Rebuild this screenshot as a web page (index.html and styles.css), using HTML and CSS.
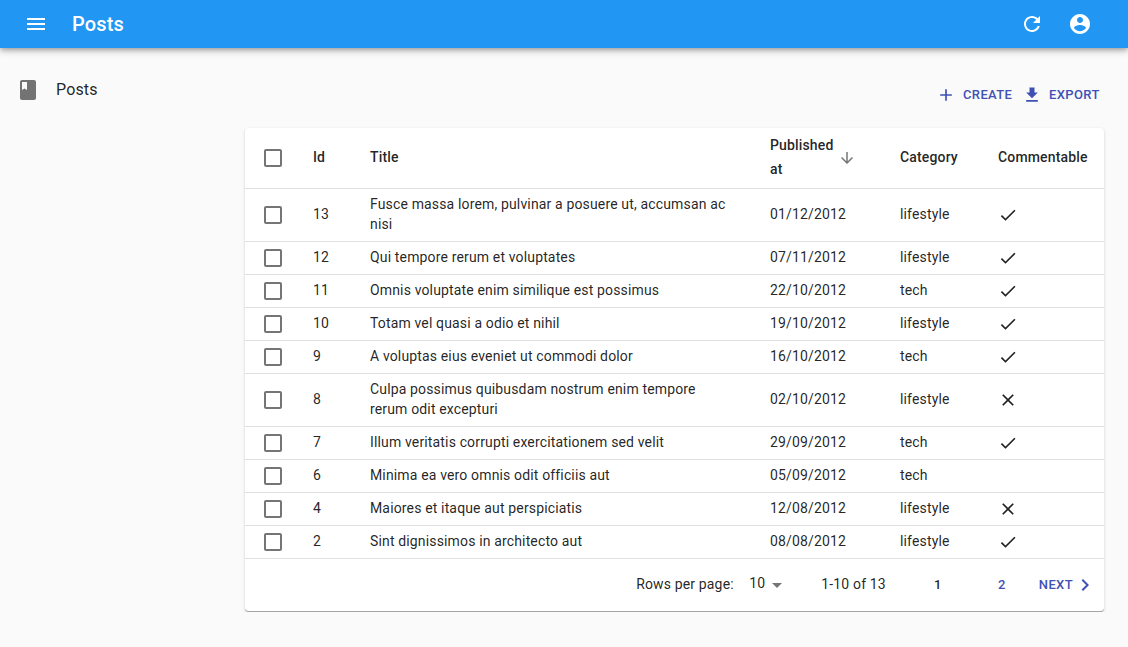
FILE: index.html
```html
<!DOCTYPE html>
<html lang="en">
<head>
<meta charset="utf-8">
<title>Posts</title>
<link rel="stylesheet" href="styles.css">
</head>
<body>
<svg class="sprite" aria-hidden="true">
  <symbol id="box" viewBox="0 0 24 24"><path d="M19 5v14H5V5h14m0-2H5c-1.100 0-2 .9-2 2v14c0 1.100.9 2 2 2h14c1.100 0 2-.9 2-2V5c0-1.100-.9-2-2-2z"/></symbol>
  <symbol id="done" viewBox="0 0 24 24"><path d="M9 16.200L4.800 12l-1.400 1.400L9 19 21 7l-1.400-1.400L9 16.200z"/></symbol>
  <symbol id="clear" viewBox="0 0 24 24"><path d="M19 6.410L17.590 5 12 10.590 6.410 5 5 6.410 10.590 12 5 17.590 6.410 19 12 13.410 17.590 19 19 17.590 13.410 12z"/></symbol>
</svg>
<header class="appbar">
  <svg class="icon" viewBox="0 0 24 24"><path d="M3 18h18v-2H3v2zm0-5h18v-2H3v2zm0-7v2h18V6H3z"/></svg>
  <h1 class="appbar-title">Posts</h1>
  <svg class="icon" viewBox="0 0 24 24"><path d="M17.650 6.350C16.200 4.900 14.210 4 12 4c-4.420 0-7.990 3.580-7.990 8s3.570 8 7.990 8c3.730 0 6.840-2.550 7.730-6h-2.080c-.82 2.330-3.040 4-5.650 4-3.310 0-6-2.690-6-6s2.690-6 6-6c1.660 0 3.140.69 4.220 1.780L13 11h7V4l-2.350 2.350z"/></svg>
  <svg class="icon account" viewBox="0 0 24 24"><path d="M12 2C6.480 2 2 6.480 2 12s4.480 10 10 10 10-4.480 10-10S17.520 2 12 2zm0 3c1.660 0 3 1.340 3 3s-1.340 3-3 3-3-1.340-3-3 1.340-3 3-3zm0 14.200c-2.500 0-4.710-1.280-6-3.220.03-1.990 4-3.080 6-3.080 1.990 0 5.970 1.090 6 3.080-1.290 1.940-3.500 3.220-6 3.220z"/></svg>
</header>
<div class="layout">
  <nav class="sidebar">
    <a class="menu-item">
      <svg class="icon" viewBox="0 0 24 24"><path d="M18 2H6c-1.100 0-2 .9-2 2v16c0 1.100.9 2 2 2h12c1.100 0 2-.9 2-2V4c0-1.100-.9-2-2-2zM6 4h5v8l-2.500-1.500L6 12V4z"/></svg>
      <span>Posts</span>
    </a>
  </nav>
  <main class="content">
    <div class="toolbar">
      <a class="button"><svg class="icon-small" viewBox="0 0 24 24"><path d="M19 13h-6v6h-2v-6H5v-2h6V5h2v6h6v2z"/></svg>Create</a>
      <a class="button"><svg class="icon-small" viewBox="0 0 24 24"><path d="M19 9h-4V3H9v6H5l7 7 7-7zM5 18v2h14v-2H5z"/></svg>Export</a>
    </div>
    <section class="card">
      <table class="grid">
        <colgroup><col class="c-check"><col class="c-id"><col class="c-title"><col class="c-date"><col class="c-cat"><col class="c-comment"></colgroup>
        <thead>
          <tr><th class="check"><svg class="icon"><use href="#box"/></svg></th><th>Id</th><th>Title</th><th><span class="sort"><span>Published at</span><svg class="sort-icon" viewBox="0 0 24 24"><path d="M20 12l-1.410-1.410L13 16.170V4h-2v12.170l-5.580-5.590L4 12l8 8 8-8z"/></svg></span></th><th>Category</th><th>Commentable</th></tr>
        </thead>
        <tbody>
          <tr><td class="check"><svg class="icon"><use href="#box"/></svg></td><td>13</td><td class="title">Fusce massa lorem, pulvinar a posuere ut, accumsan ac nisi</td><td>01/12/2012</td><td>lifestyle</td><td class="flag"><svg class="icon-small"><use href="#done"/></svg></td></tr>
          <tr><td class="check"><svg class="icon"><use href="#box"/></svg></td><td>12</td><td class="title">Qui tempore rerum et voluptates</td><td>07/11/2012</td><td>lifestyle</td><td class="flag"><svg class="icon-small"><use href="#done"/></svg></td></tr>
          <tr><td class="check"><svg class="icon"><use href="#box"/></svg></td><td>11</td><td class="title">Omnis voluptate enim similique est possimus</td><td>22/10/2012</td><td>tech</td><td class="flag"><svg class="icon-small"><use href="#done"/></svg></td></tr>
          <tr><td class="check"><svg class="icon"><use href="#box"/></svg></td><td>10</td><td class="title">Totam vel quasi a odio et nihil</td><td>19/10/2012</td><td>lifestyle</td><td class="flag"><svg class="icon-small"><use href="#done"/></svg></td></tr>
          <tr><td class="check"><svg class="icon"><use href="#box"/></svg></td><td>9</td><td class="title">A voluptas eius eveniet ut commodi dolor</td><td>16/10/2012</td><td>tech</td><td class="flag"><svg class="icon-small"><use href="#done"/></svg></td></tr>
          <tr><td class="check"><svg class="icon"><use href="#box"/></svg></td><td>8</td><td class="title">Culpa possimus quibusdam nostrum enim tempore rerum odit excepturi</td><td>02/10/2012</td><td>lifestyle</td><td class="flag"><svg class="icon-small"><use href="#clear"/></svg></td></tr>
          <tr><td class="check"><svg class="icon"><use href="#box"/></svg></td><td>7</td><td class="title">Illum veritatis corrupti exercitationem sed velit</td><td>29/09/2012</td><td>tech</td><td class="flag"><svg class="icon-small"><use href="#done"/></svg></td></tr>
          <tr><td class="check"><svg class="icon"><use href="#box"/></svg></td><td>6</td><td class="title">Minima ea vero omnis odit officiis aut</td><td>05/09/2012</td><td>tech</td><td class="flag"></td></tr>
          <tr><td class="check"><svg class="icon"><use href="#box"/></svg></td><td>4</td><td class="title">Maiores et itaque aut perspiciatis</td><td>12/08/2012</td><td>lifestyle</td><td class="flag"><svg class="icon-small"><use href="#clear"/></svg></td></tr>
          <tr><td class="check"><svg class="icon"><use href="#box"/></svg></td><td>2</td><td class="title">Sint dignissimos in architecto aut</td><td>08/08/2012</td><td>lifestyle</td><td class="flag"><svg class="icon-small"><use href="#done"/></svg></td></tr>
        </tbody>
      </table>
      <footer class="pagination">
        <span class="label">Rows per page:</span>
        <span class="select">10<svg class="icon" viewBox="0 0 24 24"><path d="M7 10l5 5 5-5z"/></svg></span>
        <span class="range">1-10 of 13</span>
        <a class="page current">1</a>
        <a class="page">2</a>
        <a class="next">Next<svg class="icon" viewBox="0 0 24 24"><path d="M10 6L8.590 7.410 13.170 12l-4.580 4.590L10 18l6-6z"/></svg></a>
      </footer>
    </section>
  </main>
</div>
</body>
</html>
```
FILE: styles.css
```css
* { box-sizing: border-box; }
body {
  margin: 0;
  background: #fafafa;
  color: rgba(0, 0, 0, .87);
  font: 400 14px/20px Roboto, sans-serif;
  letter-spacing: .15px;
}
svg { display: block; flex: none; fill: currentColor; }
.sprite { display: none; }
.icon { width: 24px; height: 24px; }
.icon-small { width: 20px; height: 20px; }

.appbar {
  display: flex;
  align-items: center;
  height: 48px;
  padding: 0 36px 0 24px;
  background: #2196f3;
  color: #fff;
  box-shadow: 0 2px 4px -1px rgba(0,0,0,.2), 0 4px 5px rgba(0,0,0,.14), 0 1px 10px rgba(0,0,0,.12);
}
.appbar-title {
  flex: 1;
  margin: 0 0 0 24px;
  font-size: 20px;
  font-weight: 500;
  line-height: 32px;
  letter-spacing: .15px;
}
.account { margin-left: 24px; }

.layout { display: flex; }
.sidebar { width: 245px; padding-top: 24px; }
.menu-item {
  display: flex;
  align-items: center;
  gap: 16px;
  height: 36px;
  padding-left: 16px;
  font-size: 16px;
  line-height: 24px;
}
.menu-item svg { color: rgba(0,0,0,.54); }
.menu-item span { padding-bottom: 1px; }
.content { width: 859px; }

.toolbar {
  display: flex;
  justify-content: flex-end;
  gap: 10px;
  height: 80px;
  padding: 37px 4.300px 0 0;
}
.button, .page, .next {
  display: flex;
  align-items: center;
  color: #3f51b5;
  font-size: 13px;
  font-weight: 500;
  line-height: 20px;
  letter-spacing: .37px;
  text-transform: uppercase;
}
.button { gap: 6.700px; height: 20px; }

.card {
  background: #fff;
  border-bottom: 1px solid #a3a3a3;
  border-radius: 4px;
  box-shadow: 0 1px 3px rgba(0,0,0,.18);
}
.grid { width: 100%; table-layout: fixed; border-collapse: separate; border-spacing: 0; }
.c-check { width: 68px; }
.c-id { width: 57px; }
.c-title { width: 400px; }
.c-date { width: 130px; }
.c-cat { width: 98px; }
.c-comment { width: 106px; }
th, td {
  padding: 0;
  border-bottom: 1px solid #e0e0e0;
  text-align: left;
  vertical-align: middle;
}
th { height: 61px; padding-bottom: 2px; font-weight: 500; line-height: 24px; }
td { height: 33px; padding-bottom: 2px; }
th.check, td.check { padding: 0 0 0 16px; color: rgba(0,0,0,.54); }
td.title { padding: 5px 44px 7px 0; }
td.flag { padding: 0; }
.sort { display: flex; align-items: center; width: 88px; }
.sort span { width: 68px; }
.sort-icon { width: 18px; height: 18px; color: rgba(0,0,0,.54); margin-top: 1px; }

.pagination {
  display: flex;
  align-items: center;
  justify-content: flex-end;
  height: 52px;
  padding-right: 7px;
}
.label, .range { padding-bottom: 2px; }
.select { display: flex; align-items: center; padding-bottom: 4px; margin: 0 32px 0 16px; }
.label { margin-right: -.5px; }
.select svg { margin: 2px 0 -2px 0; color: rgba(0,0,0,.54); }
.page { justify-content: center; width: 64px; }
.page.current { color: rgba(0,0,0,.87); }
.range { margin-right: 20px; }
.next { margin-left: 5px; }
```
